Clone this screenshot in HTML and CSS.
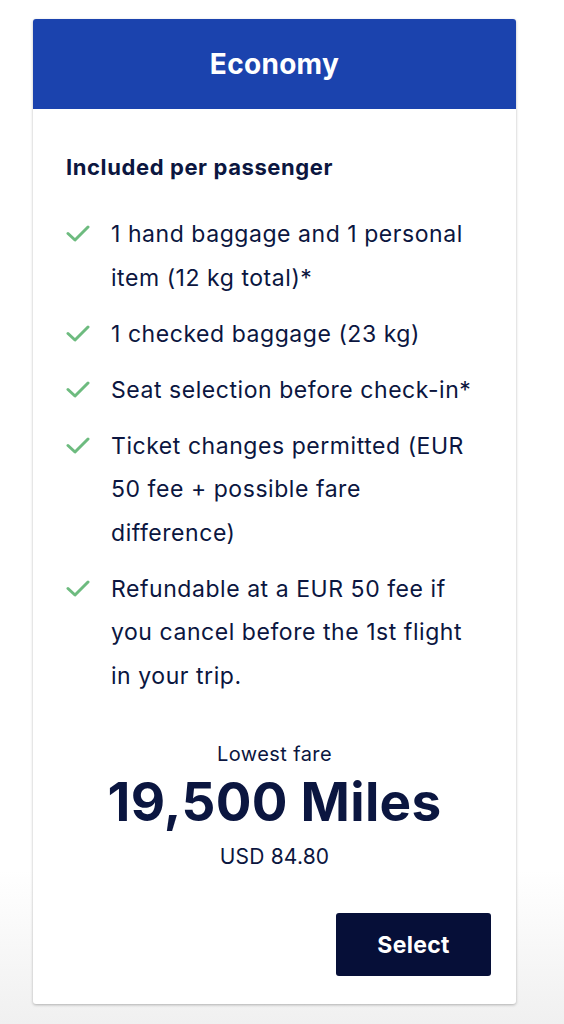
FILE: index.html
```html
<!DOCTYPE html>
<html lang="en">
<head>
<meta charset="utf-8">
<title>Economy fare</title>
<link rel="stylesheet" href="styles.css">
</head>
<body>
<div class="page">
  <section class="card">
    <header class="card-head">
      <h1 class="card-title">Economy</h1>
    </header>
    <div class="card-body">
      <h2 class="incl-title">Included per passenger</h2>
      <ul class="features">
        <li class="feature"><svg class="check" viewBox="0 0 24 18" aria-hidden="true"><path d="M2 9.5 L9 16 L22 3" fill="none" stroke="#6dbb7f" stroke-width="3" stroke-linecap="round" stroke-linejoin="round"/></svg><span>1 hand baggage and 1 personal item (12 kg total)*</span></li>
        <li class="feature"><svg class="check" viewBox="0 0 24 18" aria-hidden="true"><path d="M2 9.5 L9 16 L22 3" fill="none" stroke="#6dbb7f" stroke-width="3" stroke-linecap="round" stroke-linejoin="round"/></svg><span>1 checked baggage (23 kg)</span></li>
        <li class="feature"><svg class="check" viewBox="0 0 24 18" aria-hidden="true"><path d="M2 9.5 L9 16 L22 3" fill="none" stroke="#6dbb7f" stroke-width="3" stroke-linecap="round" stroke-linejoin="round"/></svg><span>Seat selection before check-in*</span></li>
        <li class="feature"><svg class="check" viewBox="0 0 24 18" aria-hidden="true"><path d="M2 9.5 L9 16 L22 3" fill="none" stroke="#6dbb7f" stroke-width="3" stroke-linecap="round" stroke-linejoin="round"/></svg><span>Ticket changes permitted (EUR 50 fee + possible fare difference)</span></li>
        <li class="feature"><svg class="check" viewBox="0 0 24 18" aria-hidden="true"><path d="M2 9.5 L9 16 L22 3" fill="none" stroke="#6dbb7f" stroke-width="3" stroke-linecap="round" stroke-linejoin="round"/></svg><span>Refundable at a EUR 50 fee if you cancel before the 1st flight in your trip.</span></li>
      </ul>
      <div class="price">
        <div class="price-label">Lowest fare</div>
        <div class="price-miles">19,500 Miles</div>
        <div class="price-cash">USD 84.80</div>
      </div>
      <div class="actions">
        <button class="select-btn" type="button">Select</button>
      </div>
    </div>
  </section>
</div>
</body>
</html>
```

FILE: styles.css
```css
html, body {
  margin: 0;
  padding: 0;
}
body {
  min-height: 1024px;
  background: linear-gradient(to bottom, #ffffff 0%, #ffffff 85%, #f0f0f0 100%);
  font-family: Inter, Lato, Arial, sans-serif;
  color: #0b1640;
}
.page {
  padding: 19px 0 0 33px;
}
.card {
  width: 483px;
  background: #ffffff;
  border-radius: 3px;
  box-shadow: 0 1px 3px rgba(0, 0, 0, 0.28);
  overflow: hidden;
}
.card-head {
  height: 90px;
  background: #1b43ae;
  display: flex;
  align-items: center;
  justify-content: center;
}
.card-title {
  margin: 0;
  color: #ffffff;
  font-size: 28px;
  font-weight: 700;
  letter-spacing: 0.3px;
}
.card-body {
  padding: 44px 33px 28px 33px;
}
.incl-title {
  margin: 0 0 32px 0;
  font-size: 22px;
  line-height: 28px;
  font-weight: 700;
  letter-spacing: 0.6px;
}
.features {
  list-style: none;
  margin: 0;
  padding: 0;
}
.feature {
  display: flex;
  align-items: flex-start;
  font-size: 23px;
  line-height: 43.5px;
  letter-spacing: 0.55px;
  margin-bottom: 12.5px;
}
.feature:last-child {
  margin-bottom: 0;
}
.check {
  flex: none;
  width: 24px;
  height: 18px;
  margin: 11px 21px 0 0;
}
.price {
  margin-top: 43.5px;
  text-align: center;
}
.price-label {
  font-size: 20px;
  line-height: 24px;
  letter-spacing: 0.4px;
}
.price-miles {
  margin-top: 8px;
  font-size: 53px;
  line-height: 56px;
  font-weight: 700;
  letter-spacing: 0.3px;
}
.price-cash {
  margin-top: 15px;
  font-size: 21px;
  line-height: 24px;
  letter-spacing: 0.2px;
}
.actions {
  display: flex;
  justify-content: flex-end;
  margin: 44.5px -8px 0 0;
}
.select-btn {
  width: 155px;
  height: 63px;
  border: none;
  border-radius: 3px;
  background: #060f38;
  color: #ffffff;
  font-family: inherit;
  font-size: 23px;
  font-weight: 700;
  letter-spacing: 0.3px;
  cursor: pointer;
}
```
